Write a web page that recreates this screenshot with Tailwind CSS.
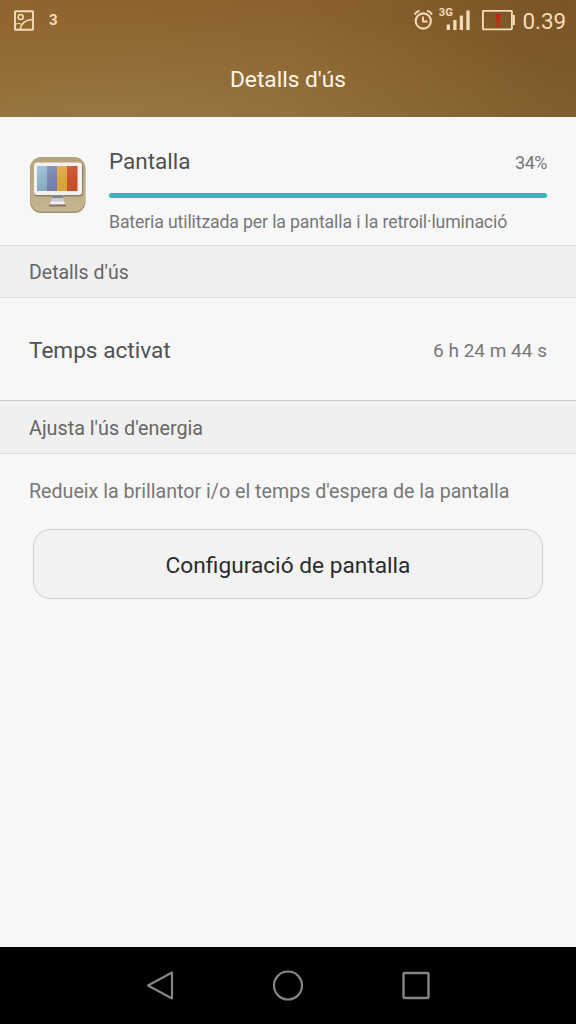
<!DOCTYPE html>
<html lang="ca">
<head>
<meta charset="utf-8">
<title>Detalls d'ús</title>
<script src="https://cdn.jsdelivr.net/npm/@tailwindcss/browser@4"></script>
</head>
<body class="flex h-[1024px] w-[576px] flex-col overflow-hidden bg-[#f7f7f7] font-['Roboto',sans-serif] whitespace-nowrap">
  <header class="h-[117px] shrink-0 bg-[radial-gradient(ellipse_520px_130px_at_18%_110%,#a3875299_0%,#9c7d4866_45%,transparent_100%),linear-gradient(168deg,transparent_30%,#8a6b3860_100%),linear-gradient(97deg,#8f642e_0%,#8b622f_50%,#795223_95%)]">
    <div class="flex h-10 items-center justify-between pl-[14px] pr-[10px] text-[#f5dcb8]">
      <div class="flex items-center gap-[15px]">
        <svg class="h-[21px] w-5" viewBox="0 0 20 21" fill="none" stroke="currentColor" stroke-width="1.600"><rect x="1" y="1.300" width="18" height="18.400" rx="0.500" stroke-width="1.900"/><circle cx="6.700" cy="7" r="2.500"/><path d="M6.200 19.500C7 13.500 11.500 10 18.500 9.500"/><path d="M1.500 14.200Q4.500 12.800 7.500 14.300" stroke-width="1.100"/></svg>
        <span class="text-[15px] leading-5 font-bold">3</span>
      </div>
      <div class="flex items-center">
        <svg class="h-[30px] w-[104px]" viewBox="413 5 104 30" fill="none" stroke="currentColor">
          <circle cx="423.300" cy="21" r="7.600" stroke-width="2.100"/>
          <path d="M423 16.500V21.500H427.500" stroke-width="1.800"/>
          <path d="M414.700 14.500Q416.200 11.500 419.500 10.800M432 14.500Q430.400 11.500 427 10.800" stroke-width="2"/>
          <text x="438.800" y="15.500" fill="currentColor" stroke="none" font-size="11" font-weight="700" textLength="14" lengthAdjust="spacingAndGlyphs">3G</text>
          <path d="M448.300 30V24.500M454.900 30V20M461.400 30V15.500M468 30V10.500" stroke-width="3.300"/>
          <rect x="482.900" y="10.900" width="29" height="18.400" rx="0.500" stroke-width="1.800"/>
          <path d="M513.800 15V25" stroke-width="2.200"/>
          <path d="M496 14H500L499.300 23H496.700ZM496.500 24.500H499.500V27H496.500Z" fill="#d0200f" stroke="none"/>
        </svg>
        <span class="ml-[6px] pt-px text-[22.500px] leading-10 tracking-[-0.1px]">0.39</span>
      </div>
    </div>
    <h1 class="pt-px text-center text-[22.700px] leading-[78px] text-[#fff6e6]">Detalls d'ús</h1>
  </header>
  <main class="flex-1">
    <section class="flex h-[128px] px-[29px] pt-8">
      <svg class="mt-[7px] h-[58px] w-[58px] shrink-0" viewBox="0 0 58 58">
        <defs>
          <linearGradient id="tile" x2="0" y2="1"><stop stop-color="#b6a27b"/><stop offset="1" stop-color="#c5b592"/></linearGradient>
          <linearGradient id="shine" x2="1" y2="1"><stop stop-color="#fff" stop-opacity=".25"/><stop offset="1" stop-color="#000" stop-opacity=".08"/></linearGradient>
        </defs>
        <rect x="1" y="1.500" width="55.500" height="55.500" rx="11" fill="#a3926e"/>
        <rect x="1.500" y="1" width="54.500" height="54.500" rx="11" fill="url(#tile)"/>
        <rect x="5" y="8.500" width="49" height="32" rx="3" fill="#77694f" opacity=".65"/>
        <path d="M22.500 39H34.500V46.500H22.500Z" fill="#c9ccd0"/><path d="M22.500 39H34.500V42H22.500Z" fill="#85888d"/>
        <path d="M22.500 45.500H34.500L37 48.500H20Z" fill="#f1f1ef"/><path d="M20 48.500H37V50.500H20Z" fill="#827966"/>
        <rect x="5" y="6.500" width="48" height="32.500" rx="3" fill="#f1f1f0"/>
        <path d="M8 10H18V35H8Z" fill="#8bb7d0"/><path d="M18 10H28V35H18Z" fill="#7585b7"/><path d="M28 10H38V35H28Z" fill="#efb335"/><path d="M38 10H48.500V35H38Z" fill="#dd522a"/>
        <path d="M8 10H48.500V35H8Z" fill="url(#shine)"/>
      </svg>
      <div class="ml-[22px] flex-1">
        <div class="flex h-[24px] items-center justify-between"><span class="pt-[2px] text-[22.500px] text-[#505050]">Pantalla</span><span class="pt-[3px] text-[18px] tracking-[-0.5px] text-[#777]">34%</span></div>
        <div class="mt-[20px] h-[5px] rounded-full bg-[#2fb8be]"></div>
        <p class="mt-[11px] text-[17.700px] leading-[26px] tracking-[-0.14px] text-[#777]">Bateria utilitzada per la pantalla i la retroil·luminació</p>
      </div>
    </section>
    <h2 class="flex h-[53px] items-center border-y border-[#dcdcdc] bg-[#f0f0f0] pt-[3px] pl-[29px] text-[19.500px] text-[#666]">Detalls d'ús</h2>
    <div class="flex h-[102px] items-center justify-between px-[29px] pt-[4px]"><span class="text-[22.600px] text-[#505050]">Temps activat</span><span class="text-[19px] text-[#777]">6 h 24 m 44 s</span></div>
    <h2 class="flex h-[54px] items-center border-y border-t-[#c9caca] border-b-[#dcdcdc] bg-[#f0f0f0] pt-[4px] pl-[29px] text-[19.750px] text-[#666]">Ajusta l'ús d'energia</h2>
    <p class="pt-[25px] pl-[29px] text-[19.650px] leading-[26px] text-[#777]">Redueix la brillantor i/o el temps d'espera de la pantalla</p>
    <button class="mx-[33px] mt-[24px] block h-[70px] w-[510px] rounded-[17px] border border-[#d0d0d0] bg-[#f2f2f2] pt-[5px] text-[22.700px] text-[#2b2b2b]">Configuració de pantalla</button>
  </main>
  <nav class="flex h-[77px] shrink-0 justify-center gap-24 bg-black pt-[22px]">
    <svg class="h-8 w-8" viewBox="0 0 32 32" fill="none" stroke="#858585" stroke-width="2.200" stroke-linejoin="round"><path d="M28 3.500V29.500L4 16.500Z"/></svg>
    <svg class="h-8 w-8" viewBox="0 0 32 32" fill="none" stroke="#858585" stroke-width="2.200"><circle cx="16" cy="16.500" r="14"/></svg>
    <svg class="h-8 w-8" viewBox="0 0 32 32" fill="none" stroke="#858585" stroke-width="2.400"><rect x="3.500" y="4" width="25" height="25" rx="1"/></svg>
  </nav>
</body>
</html>
